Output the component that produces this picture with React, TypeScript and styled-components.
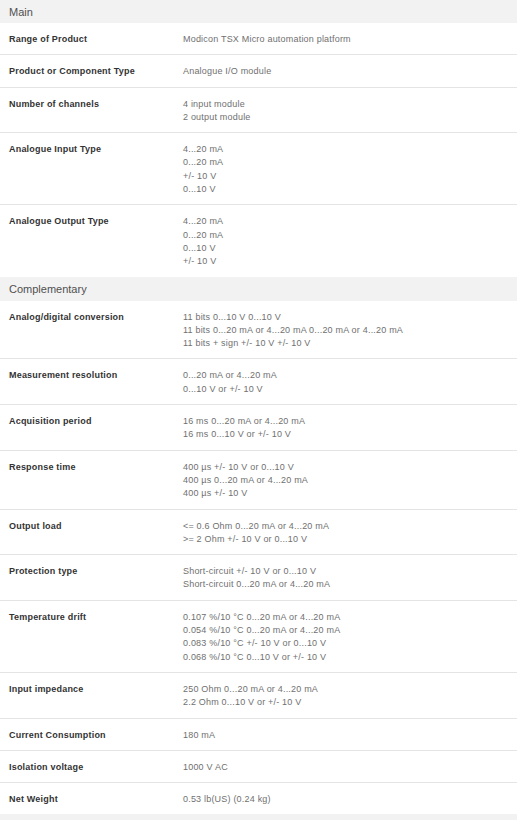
import React from "react";
import styled, { createGlobalStyle } from "styled-components";

const Global = createGlobalStyle`
  html, body { margin: 0; padding: 0; background: #ffffff; }
  body { font-family: "Liberation Sans", Arial, sans-serif; }
`;

const Page = styled.div`
  width: 517px;
  display: flex;
  flex-direction: column;
`;

const SectionHeader = styled.div<{ $first?: boolean }>`
  height: ${(p) => (p.$first ? "23px" : "24px")};
  background: #f2f2f2;
  display: flex;
  align-items: center;
  padding-left: 9px;
  font-size: 11px;
  color: #505050;
`;

const Row = styled.div`
  display: grid;
  grid-template-columns: 174px 1fr;
  padding: 10px 0 8px 9px;
  border-bottom: 1px solid #e4e4e4;
  &:last-child { border-bottom: none; }
`;

const Label = styled.div`
  font-size: 9px;
  font-weight: bold;
  line-height: 13.3px;
  color: #333333;
  letter-spacing: 0.2px;
`;

const Values = styled.div`
  display: flex;
  flex-direction: column;
  font-size: 9px;
  line-height: 13.3px;
  color: #707070;
  letter-spacing: 0.2px;
`;

const Section = styled.section`
  display: flex;
  flex-direction: column;
`;

type Item = [string, string[]];

const main: Item[] = [
  ["Range of Product", ["Modicon TSX Micro automation platform"]],
  ["Product or Component Type", ["Analogue I/O module"]],
  ["Number of channels", ["4 input module", "2 output module"]],
  ["Analogue Input Type", ["4...20 mA", "0...20 mA", "+/- 10 V", "0...10 V"]],
  ["Analogue Output Type", ["4...20 mA", "0...20 mA", "0...10 V", "+/- 10 V"]],
];

const comp: Item[] = [
  [
    "Analog/digital conversion",
    [
      "11 bits 0...10 V 0...10 V",
      "11 bits 0...20 mA or 4...20 mA 0...20 mA or 4...20 mA",
      "11 bits + sign +/- 10 V +/- 10 V",
    ],
  ],
  ["Measurement resolution", ["0...20 mA or 4...20 mA", "0...10 V or +/- 10 V"]],
  ["Acquisition period", ["16 ms 0...20 mA or 4...20 mA", "16 ms 0...10 V or +/- 10 V"]],
  [
    "Response time",
    ["400 µs +/- 10 V or 0...10 V", "400 µs 0...20 mA or 4...20 mA", "400 µs +/- 10 V"],
  ],
  ["Output load", ["<= 0.6 Ohm 0...20 mA or 4...20 mA", ">= 2 Ohm +/- 10 V or 0...10 V"]],
  [
    "Protection type",
    ["Short-circuit +/- 10 V or 0...10 V", "Short-circuit 0...20 mA or 4...20 mA"],
  ],
  [
    "Temperature drift",
    [
      "0.107 %/10 °C 0...20 mA or 4...20 mA",
      "0.054 %/10 °C 0...20 mA or 4...20 mA",
      "0.083 %/10 °C +/- 10 V or 0...10 V",
      "0.068 %/10 °C 0...10 V or +/- 10 V",
    ],
  ],
  ["Input impedance", ["250 Ohm 0...20 mA or 4...20 mA", "2.2 Ohm 0...10 V or +/- 10 V"]],
  ["Current Consumption", ["180 mA"]],
  ["Isolation voltage", ["1000 V AC"]],
  ["Net Weight", ["0.53 lb(US) (0.24 kg)"]],
];

const Rows = ({ items }: { items: Item[] }) => (
  <Section>
    {items.map(([label, vals]) => (
      <Row key={label}>
        <Label>{label}</Label>
        <Values>
          {vals.map((v) => (
            <span key={v}>{v}</span>
          ))}
        </Values>
      </Row>
    ))}
  </Section>
);

export default function App() {
  return (
    <>
      <Global />
      <Page>
        <SectionHeader $first>Main</SectionHeader>
        <Rows items={main} />
        <SectionHeader>Complementary</SectionHeader>
        <Rows items={comp} />
        <SectionHeader />
      </Page>
    </>
  );
}
